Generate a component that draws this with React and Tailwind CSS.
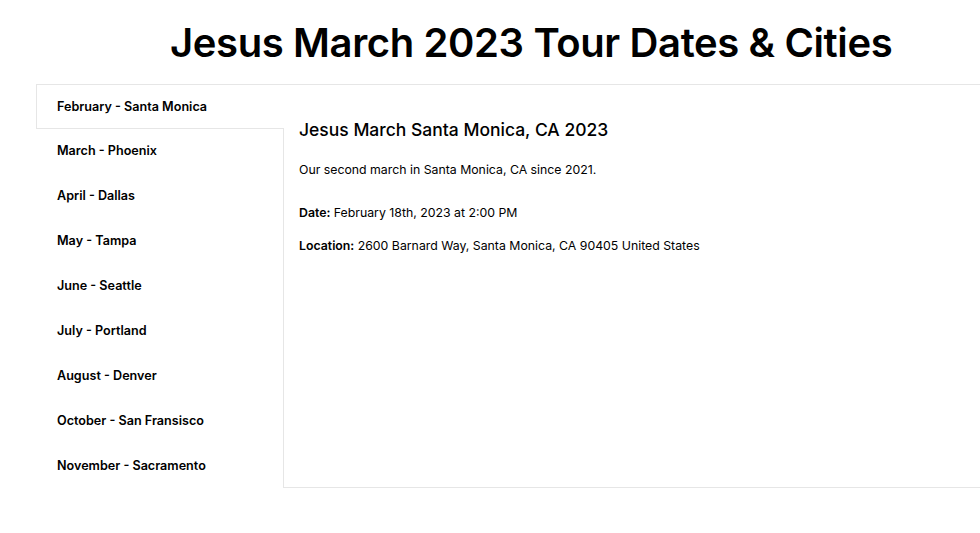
const tabs = [
  "February - Santa Monica",
  "March - Phoenix",
  "April - Dallas",
  "May - Tampa",
  "June - Seattle",
  "July - Portland",
  "August - Denver",
  "October - San Fransisco",
  "November - Sacramento",
];

export default function App() {
  const active = 0;
  return (
    <div className="min-h-[533px] w-[980px] overflow-hidden bg-white font-['Inter',sans-serif] text-black">
      <h1 className="pl-[170px] pt-[19px] h-[84px] text-[40px] leading-[48px] font-semibold tracking-[-0.38px] whitespace-nowrap">
        Jesus March 2023 Tour Dates &amp; Cities
      </h1>

      <div className="flex pl-[36px]">
        <div className="w-[247px] shrink-0 flex flex-col">
          {tabs.map((t, i) => (
            <div
              key={t}
              className={
                i === active
                  ? "relative z-10 -mr-px h-[45px] flex items-center pl-[20px] pt-px bg-white border-t border-l border-b border-[#e6e6e6] text-[12.6px] font-semibold"
                  : "h-[45px] flex items-center pl-[21px] text-[12.6px] font-semibold"
              }
            >
              {t}
            </div>
          ))}
        </div>

        <div className="flex-1 h-[404px] border-t border-l border-b border-[#e6e6e6] pl-[15px] pt-[33px]">
          <h2 className="text-[17.5px] leading-[24px] font-medium whitespace-nowrap">
            Jesus March Santa Monica, CA 2023
          </h2>
          <p className="mt-[20px] text-[12.3px] leading-[16px]">
            Our second march in Santa Monica, CA since 2021.
          </p>
          <p className="mt-[27px] text-[12.3px] leading-[16px]">
            <span className="font-semibold">Date:</span> February 18th, 2023 at 2:00 PM
          </p>
          <p className="mt-[17px] text-[12.3px] leading-[16px]">
            <span className="font-semibold">Location:</span> 2600 Barnard Way, Santa Monica, CA 90405 United States
          </p>
        </div>
      </div>
    </div>
  );
}
